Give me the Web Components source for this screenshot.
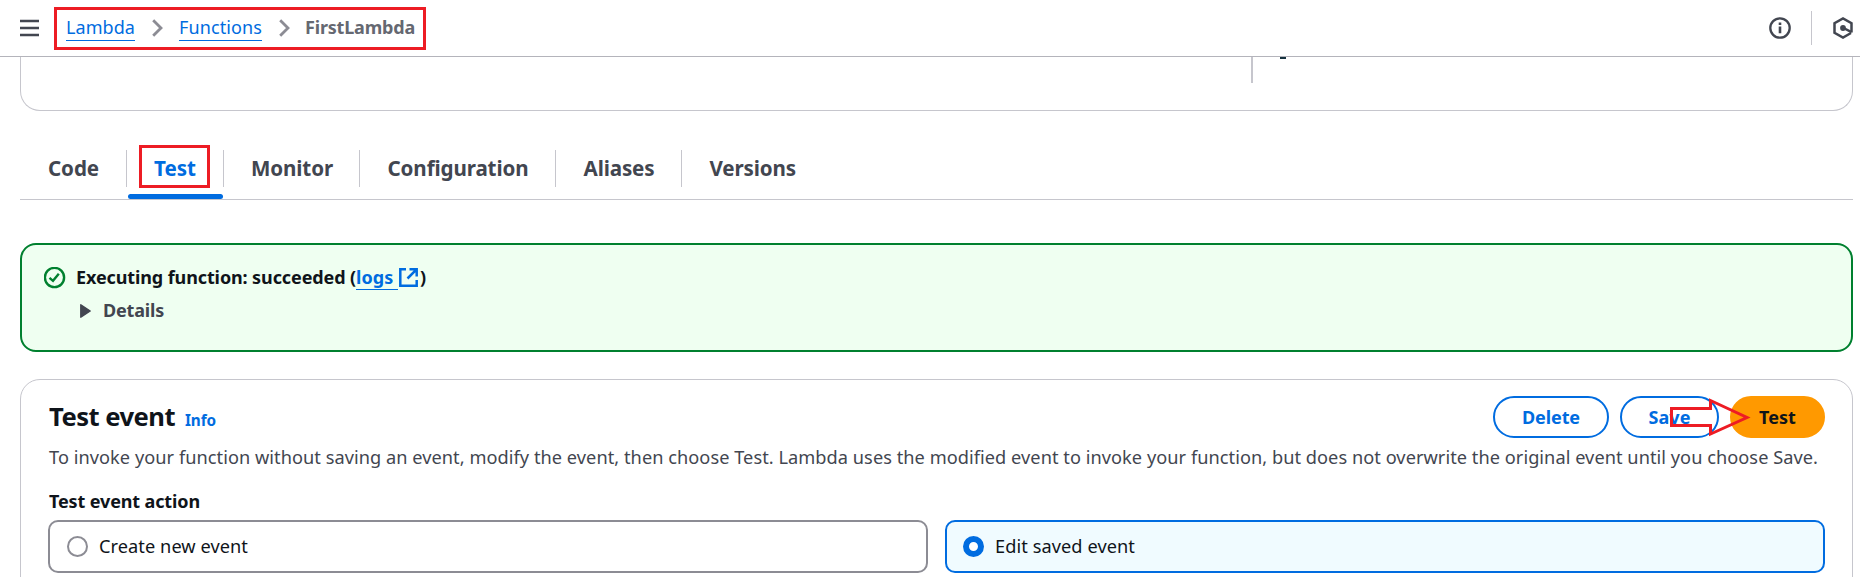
<!DOCTYPE html>
<html lang="en"><head><meta charset="utf-8"><title>FirstLambda</title>
<style>
html,body{margin:0;height:577px;overflow:hidden;background:#fff;font-family:"Noto Sans","Open Sans",sans-serif;color:#0f141a}
</style></head><body><lambda-page></lambda-page>
<script>
const define=(name,html,setup)=>customElements.define(name,class extends HTMLElement{
  connectedCallback(){ if(this.shadowRoot)return; this.attachShadow({mode:'open'}).innerHTML=html; if(setup)setup(this,this.shadowRoot); }
});

/* Text run with a fixed advance width; tracking is adjusted to fill it. */
define('fit-text',`<style>:host{display:inline-block;white-space:pre}</style><slot></slot>`,(el)=>{
  const w=+el.getAttribute('w'), n=el.textContent.length;
  const nat=el.getBoundingClientRect().width;
  el.style.letterSpacing=((w-nat)/n)+'px';
  el.style.width=w+'px';
});

define('crumb-bar',`<style>
:host{display:flex;box-sizing:border-box;height:57px;border-bottom:1px solid #b4b4bb;align-items:center;padding-left:20px;background:#fff}
.menu{display:block;margin-right:15px}
.trail{display:flex;align-items:center;box-sizing:border-box;width:372px;height:43px;margin-top:1px;border:3px solid #ed1c24;padding-left:9px;font-size:18px;line-height:24px}
.link{color:#006ce0;border-bottom:1px solid #006ce0;height:23px;line-height:21px;margin-top:0}
.chev{margin:-1px 16px 0 17px}
.chev.b{margin-right:15px}
.here{color:#656871;font-weight:700;margin-top:-3px}
.sep{width:1px;height:34px;background:#c6c6cd;margin:0 21px 0 20px}
.right{margin-left:auto;display:flex;align-items:center;margin-right:7px}
</style>
<svg class="menu" width="19" height="18" viewBox="0 0 19 18" stroke="#424650" stroke-width="2.3"><path d="M0 2h19M0 9h19M0 16h19"/></svg>
<div class="trail"><fit-text class="link" w="69">Lambda</fit-text>
<svg class="chev" width="11" height="18" viewBox="0 0 11 18" fill="none" stroke="#8c8c94" stroke-width="2.8"><path d="M1.2 1.2 9 9 1.2 16.8"/></svg>
<fit-text class="link" w="83">Functions</fit-text>
<svg class="chev b" width="11" height="18" viewBox="0 0 11 18" fill="none" stroke="#8c8c94" stroke-width="2.8"><path d="M1.2 1.2 9 9 1.2 16.8"/></svg>
<fit-text class="here" w="110">FirstLambda</fit-text></div>
<div class="right">
<svg width="22" height="22" viewBox="0 0 22 22" fill="none" stroke="#424650" stroke-width="2.3"><circle cx="11" cy="11" r="9.7"/><path stroke-width="2.600" d="M11 9.500v6.800M11 5.500v2.600"/></svg>
<div class="sep"></div>
<svg width="20" height="22" viewBox="0 0 20 22" fill="none" stroke="#424650" stroke-width="2.5"><path d="M18.500 15.500V6.200L10 1.500 1.500 6.200v9.600L10 20.500l8-4.500"/><circle cx="10" cy="11" r="2.900" fill="#424650" stroke="none"/><path d="M10.500 11 18.500 15.200"/></svg>
</div>`);

define('overview-end',`<style>
:host{display:flex;box-sizing:border-box;height:54px;margin:0 7px 0 20px;border:1px solid #c6c6cd;border-top:0;border-radius:0 0 20px 20px}
.line{width:2px;height:26px;margin-left:1230px;background:#c6c6cd}.bit{width:6px;height:2px;margin-left:27px;background:#16323f}
</style><div class="line"></div><div class="bit"></div>`);

define('nav-tab',`<style>
:host{display:flex;position:relative;box-sizing:border-box;height:59px;padding-left:27.500px;font-size:20.600px;font-weight:700;line-height:27px;color:#424650}
.t{padding-top:15px}
:host([div])::after{content:"";position:absolute;right:0;top:10px;width:1px;height:37px;background:#c6c6cd}
:host([active]){color:#006ce0}
:host([active])::before{content:"";position:absolute;left:1px;right:1px;bottom:0;height:5px;border-radius:3px;background:#006ce0}
:host([active]) .m{position:absolute;left:12px;top:5px;width:71px;height:43px;box-sizing:border-box;border:3px solid #ed1c24}
</style><div class="t"><slot></slot></div><div class="m"></div>`);

define('tab-strip',`<style>
:host{display:flex;box-sizing:border-box;height:60px;margin:29px 7px 0 20px;border-bottom:1px solid #c6c6cd}
</style>
<nav-tab div style="width:107px;padding-left:28px"><fit-text w="51">Code</fit-text></nav-tab>
<nav-tab div active style="width:97px;padding-left:27px"><fit-text w="42">Test</fit-text></nav-tab>
<nav-tab div style="width:136px;padding-left:27px"><fit-text w="82">Monitor</fit-text></nav-tab>
<nav-tab div style="width:196px"><fit-text w="141">Configuration</fit-text></nav-tab>
<nav-tab div style="width:126px"><fit-text w="71">Aliases</fit-text></nav-tab>
<nav-tab><fit-text w="86.500">Versions</fit-text></nav-tab>`);

define('success-flash',`<style>
:host{display:flex;box-sizing:border-box;height:109px;margin:43px 7px 0 20px;padding:20px 0 0 22px;border:2px solid #00802f;border-radius:16px;background:#effff1;font-size:18px;font-weight:700;line-height:25px}
.ok{margin:2px 10px 0 0}
.row{display:flex}
.link{color:#006ce0;border-bottom:1px solid #006ce0;height:24px}
.ext{margin:3px 2px 0 1px}
.det{display:flex;align-items:center;margin-top:8px;margin-left:4px;color:#424650}
.tri{margin:1px 12px 0 0}
</style>
<svg class="ok" width="22" height="22" viewBox="0 0 22 22" fill="none" stroke="#00802f" stroke-width="2.400"><circle cx="10.500" cy="10.500" r="9.600"/><path d="M5.500 10.800 9 13.800 14.800 6.700"/></svg>
<div><div class="row"><fit-text w="274">Executing function: succeeded </fit-text><fit-text w="6">(</fit-text><fit-text class="link" w="42">logs </fit-text>
<svg class="ext" width="19" height="19" viewBox="0 0 19 19" fill="none" stroke="#006ce0" stroke-width="2.500"><path d="M7 1.300H1.300v16.400h16.400V12M10.500 1.300h7.200V8.500M17.300 1.700 8.500 10.500"/></svg><fit-text w="6">)</fit-text></div>
<div class="det"><svg class="tri" width="11" height="14" viewBox="0 0 11 14"><path d="M.8.8 10.200 7 .8 13.200Z" fill="#424650" stroke="#424650" stroke-width="1.400" stroke-linejoin="round"/></svg><fit-text w="61">Details</fit-text></div></div>`);

define('pill-button',`<style>
:host{display:flex;box-sizing:border-box;height:42px;border:2px solid #006ce0;border-radius:21px;color:#006ce0;background:#fff;align-items:center;justify-content:center;font-size:18px;font-weight:700}
:host([primary]){background:#f90;border-color:#f90;color:#0f141a}
</style><slot></slot>`);

define('radio-tile',`<style>
:host{display:flex;box-sizing:border-box;height:53px;min-width:0;border:2px solid #8c8c94;border-radius:10px;padding-left:17px;align-items:center;font-size:18.200px}
i{box-sizing:border-box;width:21px;height:21px;border:2px solid #8c8c94;border-radius:50%;background:#fff;margin-right:11px;margin-top:-1px}
::slotted(fit-text){margin-top:-1px}
:host([checked]){border-color:#006ce0;background:#f0fbff;padding-left:16px}
:host([checked]) i{border:6px solid #006ce0}
</style><i></i><slot></slot>`);

define('event-panel',`<style>
:host{display:block;box-sizing:border-box;height:240px;margin:27px 7px 0 20px;border:1px solid #c6c6cd;border-radius:20px 20px 0 0;padding:16px 27px 0 27px}
.head{display:flex;height:42px;position:relative}
h2{margin:4px 0 0 1px;font-size:25.600px;line-height:34px;font-weight:700}
.info{margin:14px 0 0 10px;font-size:15.300px;line-height:20px;font-weight:700;color:#006ce0}
.btns{display:flex;margin-left:auto;gap:11px}
.arrow{position:absolute;left:1621px;top:2px}
.desc{margin:7px 0 0 1px;font-size:18.200px;line-height:25px;color:#424650;white-space:nowrap;height:25px}
.lab{margin:19px 0 0 1px;font-size:18px;line-height:25px;font-weight:700;height:25px}
.tiles{display:grid;grid-template-columns:1fr 1fr;gap:17px;margin-top:6px}
</style>
<div class="head"><h2><fit-text w="126">Test event</fit-text></h2><span class="info"><fit-text w="31">Info</fit-text></span>
<div class="btns"><pill-button style="width:116px"><fit-text w="58">Delete</fit-text></pill-button><pill-button style="width:99px"><fit-text w="42">Save</fit-text></pill-button><pill-button primary style="width:95px"><fit-text w="37">Test</fit-text></pill-button></div>
<svg class="arrow" width="82" height="39" viewBox="0 0 82 39" fill="none" stroke="#ed1c24" stroke-width="3"><path d="M2.500 10.500H41.500V2.500L78 19.500 41.500 36V27.500H2.500Z"/></svg></div>
<div class="desc"><fit-text w="1769">To invoke your function without saving an event, modify the event, then choose Test. Lambda uses the modified event to invoke your function, but does not overwrite the original event until you choose Save.</fit-text></div>
<div class="lab"><fit-text w="151">Test event action</fit-text></div>
<div class="tiles"><radio-tile><fit-text w="149">Create new event</fit-text></radio-tile><radio-tile checked><fit-text w="140">Edit saved event</fit-text></radio-tile></div>`);

define('lambda-page',`<style>:host{display:block;height:577px;overflow:hidden}</style>
<crumb-bar></crumb-bar><overview-end></overview-end><tab-strip></tab-strip><success-flash></success-flash><event-panel></event-panel>`);
</script></body></html>
